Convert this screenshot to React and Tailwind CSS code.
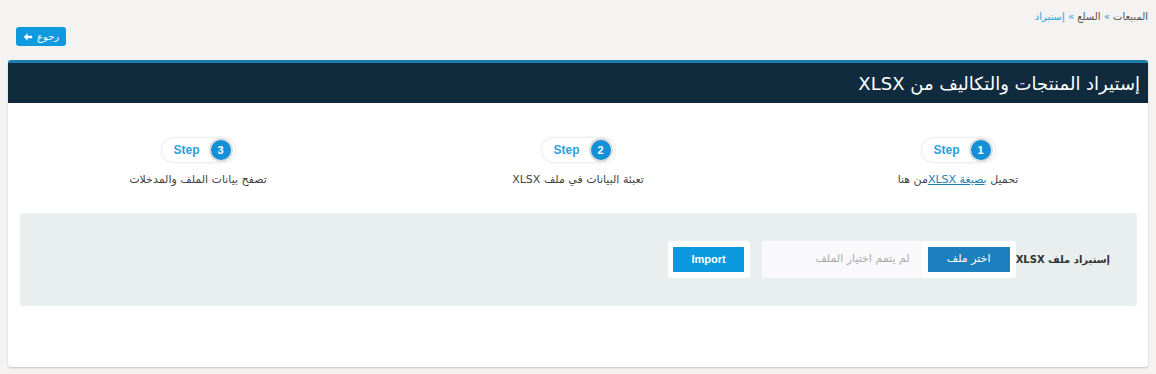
import React from 'react'

const ar = { fontFamily: '"DejaVu Sans", "Noto Sans", sans-serif' }

function StepPill({ n }) {
  return (
    <div className="flex items-center h-[24px] rounded-full bg-white shadow-[0_0_3px_rgba(0,0,0,0.18)] pr-[2px] pl-[12px]" dir="ltr">
      <span className="text-[12px] font-bold text-[#2d9fdc] mr-[9px]" style={{ fontFamily: '"Liberation Sans", sans-serif' }}>Step</span>
      <span className="flex items-center justify-center w-[24px] h-[24px] rounded-full bg-[#1490d8] border-[2px] border-[#dcdcdc] text-white text-[11px] font-bold" style={{ fontFamily: '"Liberation Sans", sans-serif' }}>{n}</span>
    </div>
  )
}

function Step({ n, children }) {
  return (
    <div className="flex flex-col items-center">
      <StepPill n={n} />
      <div className="mt-[10px] text-[11px] text-[#444]" style={ar}>{children}</div>
    </div>
  )
}

export default function App() {
  return (
    <div dir="rtl" className="min-h-[374px] bg-[#f4f3f1] px-[8px] pt-[10px] pb-[7px]" style={ar}>
      <div className="text-[10px] text-[#555] h-[14px] leading-[14px]">
        المبيعات <span className="text-[#2d9fdc]">»</span> السلع <span className="text-[#2d9fdc]">»</span> <span className="text-[#2d9fdc]">إستيراد</span>
      </div>
      <div className="flex justify-end mt-[3px] pl-[8px]">
        <button className="flex items-center gap-[4px] h-[19px] px-[7px] rounded-[3px] bg-[#0f9ae0] text-white text-[10px]">
          <span>رجوع</span>
          <svg width="10" height="10" viewBox="0 0 24 24" fill="white"><path d="M11 3 L2 12 L11 21 L11 15 L22 15 L22 9 L11 9 Z" /></svg>
        </button>
      </div>
      <div className="mt-[14px] bg-white rounded-[3px] shadow-[0_1px_2px_rgba(0,0,0,0.2)] border-t-[3px] border-[#1d7fae] h-[307px] overflow-hidden">
        <div className="h-[40px] bg-[#0f2b3d] flex items-center px-[8px]">
          <h1 className="text-white text-[18px]">إستيراد المنتجات والتكاليف من XLSX</h1>
        </div>
        <div className="grid grid-cols-3 pt-[35px]">
          <Step n={1}>
            تحميل <a className="text-[#1d7fae] underline">بصيغة XLSX</a>من هنا
          </Step>
          <Step n={2}>تعبئة البيانات في ملف XLSX</Step>
          <Step n={3}>تصفح بيانات الملف والمدخلات</Step>
        </div>
        <div className="mx-[11px] ml-[12px] mt-[24px] h-[93px] rounded-[3px] bg-[#e8efee] flex items-center pr-[27px]">
          <label className="text-[10px] font-bold text-[#333]">إستيراد ملف XLSX</label>
          <div className="flex items-stretch h-[37px] w-[254px] rounded-[3px] bg-white">
            <div className="flex items-center p-[6px]">
              <span className="flex items-center justify-center w-[82px] h-[25px] bg-[#1b80bd] text-white text-[11px]">اختر ملف</span>
            </div>
            <div className="flex-1 flex items-center bg-[#f9f9fb] pr-[12px] text-[11px] text-[#aaa] rounded-l-[3px]">لم يتمم اختيار الملف</div>
          </div>
          <div className="mr-[12px] h-[37px] w-[82px] rounded-[3px] bg-white flex items-center justify-center">
            <button className="w-[71px] h-[25px] bg-[#0b98df] text-white text-[11px] font-bold" style={{ fontFamily: '"Liberation Sans", sans-serif' }}>Import</button>
          </div>
        </div>
      </div>
    </div>
  )
}
